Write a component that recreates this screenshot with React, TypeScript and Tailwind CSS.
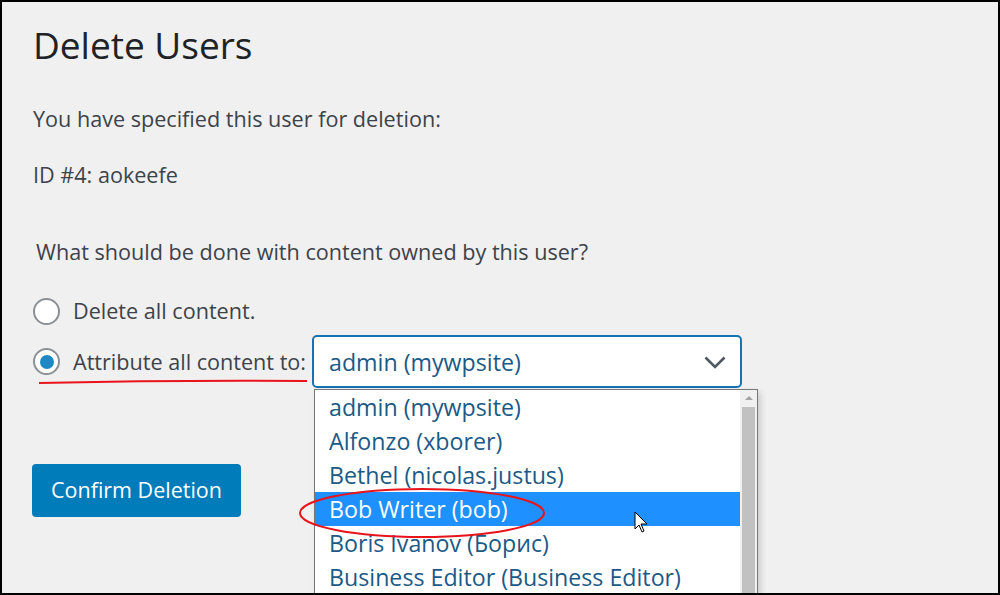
const users = [
  'admin (mywpsite)',
  'Alfonzo (xborer)',
  'Bethel (nicolas.justus)',
  'Bob Writer (bob)',
  'Boris Ivanov (Борис)',
  'Business Editor (Business Editor)',
]

function Radio({ checked }: { checked?: boolean }) {
  return (
    <span className="flex h-[27px] w-[27px] shrink-0 items-center justify-center rounded-full border-2 border-[#8c8f94] bg-white">
      {checked && <span className="h-[14px] w-[14px] rounded-full bg-[#1e88c5]" />}
    </span>
  )
}

export default function App() {
  return (
    <div className="relative h-[595px] w-[1000px] overflow-hidden border-2 border-black bg-[#f0f0f0] font-['Open_Sans',sans-serif] text-[#3c434a]">
      <div className="pl-[31px] pt-[17px]">
        <h1 className="text-[37px] leading-[52px] text-[#1d2327]">Delete Users</h1>

        <p className="mt-[34px] text-[21.6px] leading-[28px]">You have specified this user for deletion:</p>
        <p className="mt-[28px] text-[21.6px] leading-[28px]">ID #4: aokeefe</p>

        <p className="ml-[3px] mt-[49px] text-[21.6px] leading-[28px]">
          What should be done with content owned by this user?
        </p>

        <div className="mt-[31px] flex flex-col gap-[10px] text-[21.6px] leading-[28px]">
          <label className="flex items-center gap-[13px]">
            <Radio />
            <span>Delete all content.</span>
          </label>

          <div className="flex items-center">
            <label className="flex items-center gap-[13px]">
              <Radio checked />
              <span>Attribute all content to:</span>
            </label>
            <div className="relative ml-[6px]">
              <div className="flex h-[53px] w-[430px] items-center justify-between rounded-[5px] border-2 border-[#1672b3] bg-white pl-[15px] pr-[14px] text-[23.2px] text-[#1b5a86]">
                <span>admin (mywpsite)</span>
                <svg width="22" height="13" viewBox="0 0 22 13" className="mt-[2px]">
                  <polyline points="1.5,1.5 11,11 20.5,1.5" fill="none" stroke="#50575e" strokeWidth="2.6" />
                </svg>
              </div>

              <div className="absolute left-[2px] top-[54px] z-10 flex w-[444px] border border-[#767676] bg-white shadow-[3px_3px_6px_rgba(0,0,0,0.15)]">
                <ul className="flex-1">
                  {users.map((u, i) => (
                    <li
                      key={u}
                      className={
                        'h-[34px] whitespace-nowrap pl-[14px] text-[23.2px] leading-[34px] ' +
                        (i === 3 ? 'bg-[#1e90ff] text-white' : 'text-[#1b5a86]')
                      }
                    >
                      {u}
                    </li>
                  ))}
                </ul>
                <div className="flex w-[17px] flex-col items-center bg-[#f0f0f0]">
                  <span className="mt-[6px] h-0 w-0 border-x-[4px] border-b-[4px] border-x-transparent border-b-[#a3a3a3]" />
                  <span className="mt-[7px] w-[13px] flex-1 bg-[#c1c1c1]" />
                </div>
              </div>
            </div>
          </div>
        </div>

        <button className="-ml-[1px] mt-[76px] h-[53px] w-[209px] rounded-[4px] bg-[#007cba] text-[21.5px] text-white">
          Confirm Deletion
        </button>
      </div>

      {/* annotations */}
      <svg className="pointer-events-none absolute left-0 top-0 z-20" width="1000" height="595">
        <path d="M37 381 Q170 378 305 379" stroke="#e8131b" strokeWidth="2" fill="none" />
        <ellipse cx="420" cy="511" rx="122" ry="24" stroke="#e8131b" strokeWidth="2" fill="none" />
        <path
          d="M633 510 L633 527 L637 523 L640 530 L642 529 L639 522 L645 522 Z"
          fill="white"
          stroke="black"
          strokeWidth="1"
          strokeLinejoin="round"
        />
      </svg>
    </div>
  )
}
